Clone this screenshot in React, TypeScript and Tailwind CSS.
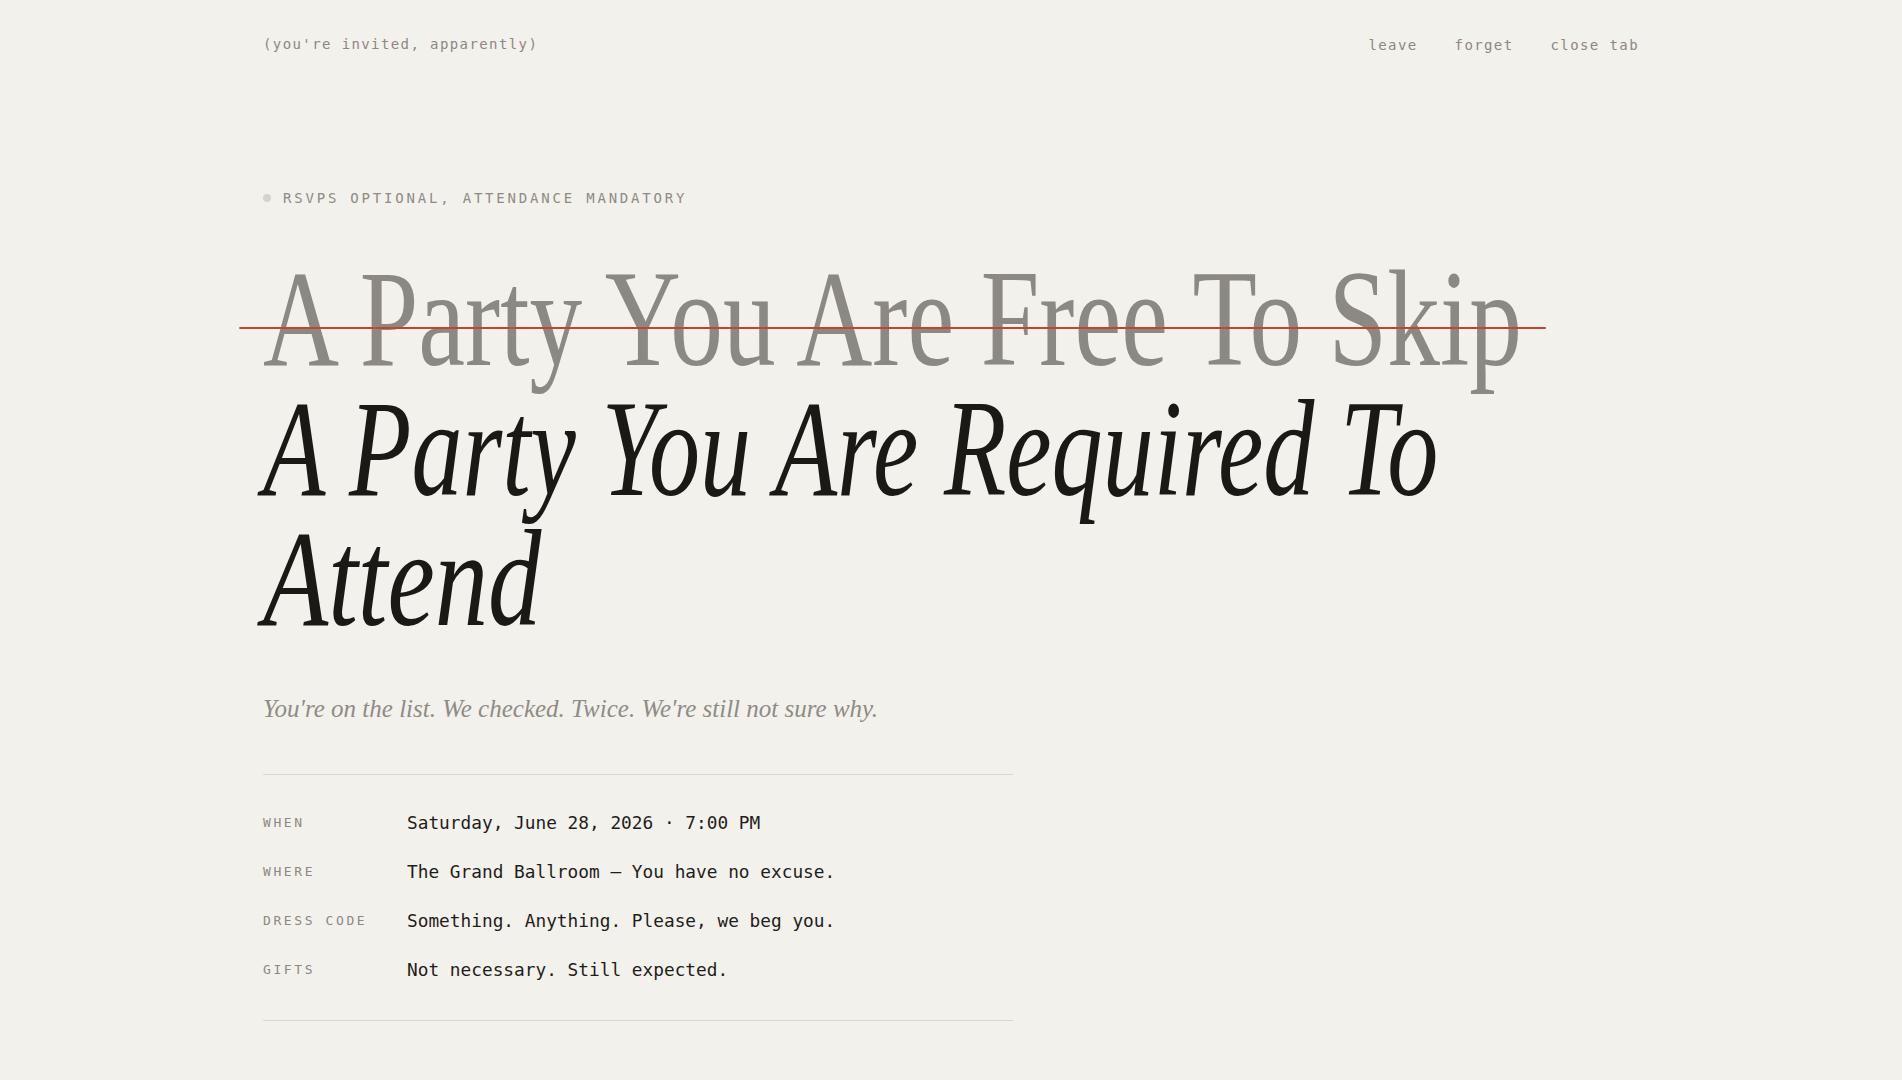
import React from "react";

const mono = "font-['DejaVu_Sans_Mono','Liberation_Mono',monospace]";
const serif = "font-['Liberation_Serif','Times_New_Roman',serif]";

const rows: { label: string; value: string }[] = [
  { label: "WHEN", value: "Saturday, June 28, 2026 · 7:00 PM" },
  { label: "WHERE", value: "The Grand Ballroom — You have no excuse." },
  { label: "DRESS CODE", value: "Something. Anything. Please, we beg you." },
  { label: "GIFTS", value: "Not necessary. Still expected." },
];

export default function App() {
  return (
    <div className="min-h-screen w-full overflow-hidden bg-[#f3f1ec] text-[#1c1a17]">
      <div className="mx-auto max-w-[1440px] px-8">
        <header
          className={`flex h-[88px] items-center justify-between ${mono} text-[14px] leading-5 tracking-[0.1em] text-[#8d8880]`}
        >
          <span>(you're invited, apparently)</span>
          <nav className="flex gap-[37px] pt-[2px]">
            <a href="#" className="hover:text-[#1c1a17]">leave</a>
            <a href="#" className="hover:text-[#1c1a17]">forget</a>
            <a href="#" className="hover:text-[#1c1a17]">close tab</a>
          </nav>
        </header>

        <main className="pt-[100px] pb-[60px]">
          <div
            className={`flex items-center gap-3 ${mono} text-[14px] leading-5 tracking-[0.2em] text-[#8f8a83]`}
          >
            <span className="h-2 w-2 rounded-full bg-[#d6d3cd]" />
            <span>RSVPS OPTIONAL, ATTENDANCE MANDATORY</span>
          </div>

          <h1 className={`mt-[46px] ${serif} text-[138px] font-normal leading-[130px]`}>
            <span className="relative block w-max origin-left scale-x-[0.764] whitespace-nowrap text-[#8c8984]">
              A Party You Are Free To Skip
              <span className="absolute -left-[31px] -right-[31px] top-[73px] h-[1.5px] bg-[#c8432f]" />
            </span>
            <span className="block w-max origin-left scale-x-[0.74] whitespace-nowrap italic text-[#1b1915]">
              A Party You Are Required To
            </span>
            <span className="block w-max origin-left scale-x-[0.773] whitespace-nowrap italic text-[#1b1915]">
              Attend
            </span>
          </h1>

          <p className={`mt-12 ${serif} text-[25px] italic leading-[34px] text-[#8f8b85]`}>
            You're on the list. We checked. Twice. We're still not sure why.
          </p>

          <dl className="mt-12 flex max-w-[750px] flex-col gap-[21px] border-y border-[#dcd8d1] pt-[34px] pb-[36px]">
            {rows.map((r) => (
              <div key={r.label} className="grid grid-cols-[144px_1fr] items-center">
                <dt className={`${mono} text-[13px] leading-5 tracking-[0.2em] text-[#8d8880]`}>
                  {r.label}
                </dt>
                <dd className={`${mono} text-[17.8px] leading-7 text-[#1f1d1a]`}>{r.value}</dd>
              </div>
            ))}
          </dl>
        </main>
      </div>
    </div>
  );
}
